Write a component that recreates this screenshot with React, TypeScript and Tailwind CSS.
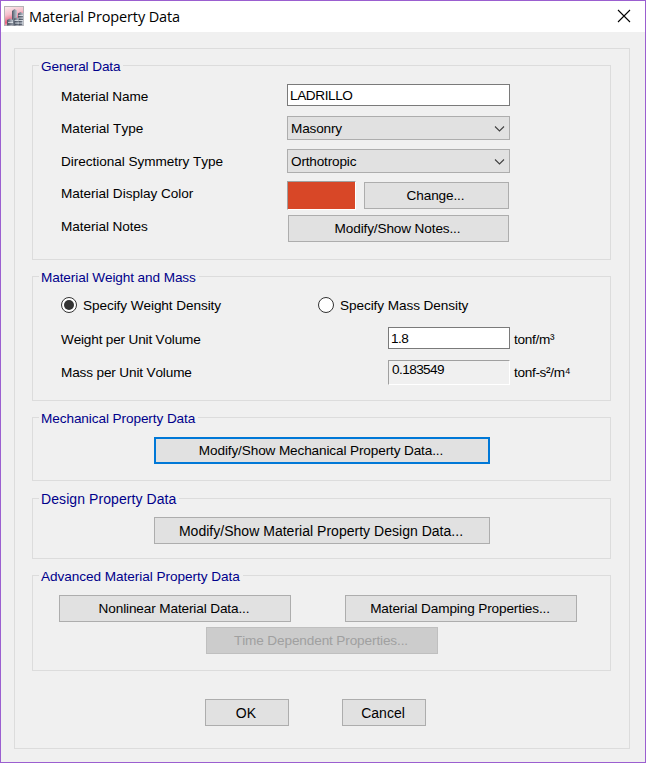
import type { ReactNode } from 'react';

function Group({ title, large = false, legendClass = 'tracking-[-0.12px]', className, children }: {
  title: string; large?: boolean; legendClass?: string; className: string; children: ReactNode;
}) {
  return (
    <section className={`flex w-[579px] shrink-0 flex-col items-start border border-[#dcdcdc] ${className}`}>
      <h2
        className={`ml-[6px] bg-[#f0f0f0] pr-[3px] pl-[2px] text-[#00008b] ${
          large ? '-mt-[8px] text-[14px] leading-[16px]' : '-mt-[7px] leading-[15px]'
        } ${legendClass}`}
      >
        {title}
      </h2>
      {children}
    </section>
  );
}

function Button({ className, focused = false, disabled = false, large = false, children }: {
  className: string; focused?: boolean; disabled?: boolean; large?: boolean; children: ReactNode;
}) {
  const tone = disabled
    ? 'border border-[#bfbfbf] bg-[#cccccc] pt-[5px] text-[#a0a0a0]'
    : focused
      ? 'border-2 border-[#0078d7] bg-[#e1e1e1] pt-[4px]'
      : 'border border-[#adadad] bg-[#e1e1e1] pt-[5px]';
  return (
    <button
      disabled={disabled}
      className={`flex h-[27px] shrink-0 items-start justify-center pr-[2px] ${tone} ${
        large ? 'text-[14px] leading-[16px] tracking-[0.02px]' : 'leading-[15px] tracking-[-0.13px]'
      } ${className}`}
    >
      {children}
    </button>
  );
}

function Select({ value }: { value: string }) {
  return (
    <div className="flex h-[24px] w-[223px] items-start justify-between border border-[#adadad] bg-[#e1e1e1] pt-[4px] pr-[4px] pl-[3px] tracking-[-0.18px]">
      <span>{value}</span>
      <svg width="11" height="8" viewBox="0 0 11 8" className="mt-[4px]" fill="none" stroke="#404040" strokeWidth="1.1">
        <path d="M1 1.5 L5.5 6 L10 1.5" />
      </svg>
    </div>
  );
}

function Row({ label, className, labelClass, children }: {
  label: string; className: string; labelClass: string; children: ReactNode;
}) {
  return (
    <div className={`ml-[28px] flex items-start ${className}`}>
      <span className={`shrink-0 ${labelClass}`}>{label}</span>
      {children}
    </div>
  );
}

function Radio({ label, checked = false, className = '' }: { label: string; checked?: boolean; className?: string }) {
  return (
    <label className={`flex items-start gap-[6px] tracking-[-0.08px] ${className}`}>
      <span className="flex h-[16px] w-[16px] items-center justify-center rounded-full border border-[#333333] bg-white">
        {checked && <span className="h-[10px] w-[10px] rounded-full bg-[#333333]" />}
      </span>
      <span className="pt-px">{label}</span>
    </label>
  );
}

function AppIcon() {
  return (
    <svg width="20" height="20" viewBox="0 0 20 20">
      <defs>
        <linearGradient id="sky" x1="0" y1="0" x2="0.3" y2="1">
          <stop offset="0" stopColor="#fbeef1" />
          <stop offset="0.45" stopColor="#f5bfcb" />
          <stop offset="0.8" stopColor="#e4607e" />
          <stop offset="1" stopColor="#f6cdd7" />
        </linearGradient>
        <linearGradient id="steel" x1="0" y1="0" x2="1" y2="0">
          <stop offset="0" stopColor="#4c5361" />
          <stop offset="0.5" stopColor="#8a93a1" />
          <stop offset="1" stopColor="#c3c9d2" />
        </linearGradient>
      </defs>
      <rect x="0.5" y="0.5" width="19" height="19" fill="url(#sky)" stroke="#b7b3b6" />
      <path d="M8 5 L10.5 3 L13 4.5 V19.5 H8Z" fill="url(#steel)" />
      <path d="M14 7.5 L16.5 6 L19.5 7.5 V19.5 H14Z" fill="url(#steel)" />
      <path d="M3 14 L6 12.5 L9 14 V19.5 H3Z" fill="url(#steel)" />
      <path d="M10 12.5 L12.5 11.5 L15 12.5 V19.5 H10Z" fill="url(#steel)" />
      <path d="M14.5 9.5 H19 M14.5 12 H19 M15 14.5 H19 M11 17 H19 M4 16.5 H9 M10.5 14.5 H14" stroke="#eceff3" strokeWidth="0.7" />
      <path d="M14.5 10.8 H19 M14.5 13.3 H19 M11 15.8 H18 M11 18.3 H18 M4 18 H9" stroke="#343b49" strokeWidth="0.7" />
    </svg>
  );
}

export default function App() {
  return (
    <div className="flex h-[763px] w-[646px] flex-col border border-[#9b5fd0] bg-[#f0f0f0] font-['Liberation_Sans',Arial,sans-serif] text-[13.6px] leading-[15px] whitespace-nowrap text-black [font-kerning:none]">
      <header className="flex h-[31px] shrink-0 items-start bg-white pt-[5px] pl-[3px]">
        <AppIcon />
        <h1 className="ml-[5px] pt-px font-['Open_Sans',sans-serif] text-[14.5px] leading-[20px] tracking-[-0.13px]">
          Material Property Data
        </h1>
        <svg width="14" height="14" viewBox="0 0 14 14" className="mt-[3px] mr-[14px] ml-auto" stroke="#000" strokeWidth="1.1">
          <path d="M1 1 L13 13 M13 1 L1 13" />
        </svg>
      </header>

      <main className="mt-[16px] ml-[13px] flex h-[701px] w-[616px] flex-col border border-[#dcdcdc] pt-[16px] pl-[17px]">
        <Group title="General Data" className="h-[195px]">
          <Row label="Material Name" className="mt-[10px] h-[22px]" labelClass="w-[226px] pt-[5px] tracking-[-0.1px]">
            <div className="h-[22px] w-[223px] border border-[#7a7a7a] bg-white pt-[3px] pl-[2px] tracking-[-0.4px]">LADRILLO</div>
          </Row>
          <Row label="Material Type" className="mt-[10px] h-[24px]" labelClass="w-[226px] pt-[5px] tracking-[0px]">
            <Select value="Masonry" />
          </Row>
          <Row label="Directional Symmetry Type" className="mt-[9px] h-[24px]" labelClass="w-[226px] pt-[5px] tracking-[-0.05px]">
            <Select value="Orthotropic" />
          </Row>
          <Row label="Material Display Color" className="mt-[8px] h-[29px]" labelClass="w-[226px] pt-[5px] tracking-[-0.03px]">
            <div className="h-[29px] w-[69px] border border-t-[#a0a0a0] border-r-white border-b-white border-l-[#a0a0a0] bg-[#d84727]" />
            <Button className="mt-px ml-[8px] w-[145px]">Change...</Button>
          </Row>
          <Row label="Material Notes" className="mt-[5px] h-[27px]" labelClass="w-[227px] pt-[4px] tracking-[-0.06px]">
            <Button className="w-[221px]">Modify/Show Notes...</Button>
          </Row>
        </Group>

        <Group title="Material Weight and Mass" legendClass="tracking-[-0.1px]" className="mt-[16px] h-[125px]">
          <div className="mt-[12px] ml-[28px] flex h-[16px]">
            <Radio label="Specify Weight Density" checked className="w-[257px]" />
            <Radio label="Specify Mass Density" />
          </div>
          <Row label="Weight per Unit Volume" className="mt-[14px] h-[22px]" labelClass="w-[327px] pt-[5px] tracking-[-0.18px]">
            <div className="h-[22px] w-[122px] border border-[#7a7a7a] bg-white pt-[3px] pl-[2px] tracking-[-0.6px]">1.8</div>
            <span className="pt-[5px] pl-[4px] tracking-[-0.3px]">tonf/m³</span>
          </Row>
          <Row label="Mass per Unit Volume" className="mt-[11px] h-[25px]" labelClass="w-[327px] pt-[5px] tracking-[-0.15px]">
            <div className="h-[25px] w-[122px] border border-t-[#a0a0a0] border-r-white border-b-white border-l-[#a0a0a0] pt-px pl-[3px] tracking-[-0.58px]">
              0.183549
            </div>
            <span className="pt-[5px] pl-[4px] tracking-[-0.32px]">tonf-s²/m⁴</span>
          </Row>
        </Group>

        <Group title="Mechanical Property Data" legendClass="tracking-[-0.09px]" className="mt-[16px] h-[64px]">
          <Button focused className="mt-[11px] ml-[121px] w-[336px]">Modify/Show Mechanical Property Data...</Button>
        </Group>

        <Group title="Design Property Data" large legendClass="tracking-[0.08px]" className="mt-[17px] h-[61px]">
          <Button large className="mt-[10px] ml-[121px] w-[336px]">Modify/Show Material Property Design Data...</Button>
        </Group>

        <Group title="Advanced Material Property Data" legendClass="tracking-[-0.05px]" className="mt-[16px] h-[96px]">
          <div className="mt-[11px] ml-[26px] flex gap-[54px]">
            <Button className="w-[232px]">Nonlinear Material Data...</Button>
            <Button className="w-[232px]">Material Damping Properties...</Button>
          </div>
          <Button disabled className="mt-[5px] ml-[173px] w-[232px]">Time Dependent Properties...</Button>
        </Group>

        <div className="mt-[28px] ml-[173px] flex gap-[53px]">
          <Button large className="w-[84px]">OK</Button>
          <Button large className="w-[84px]">Cancel</Button>
        </div>
      </main>
    </div>
  );
}
